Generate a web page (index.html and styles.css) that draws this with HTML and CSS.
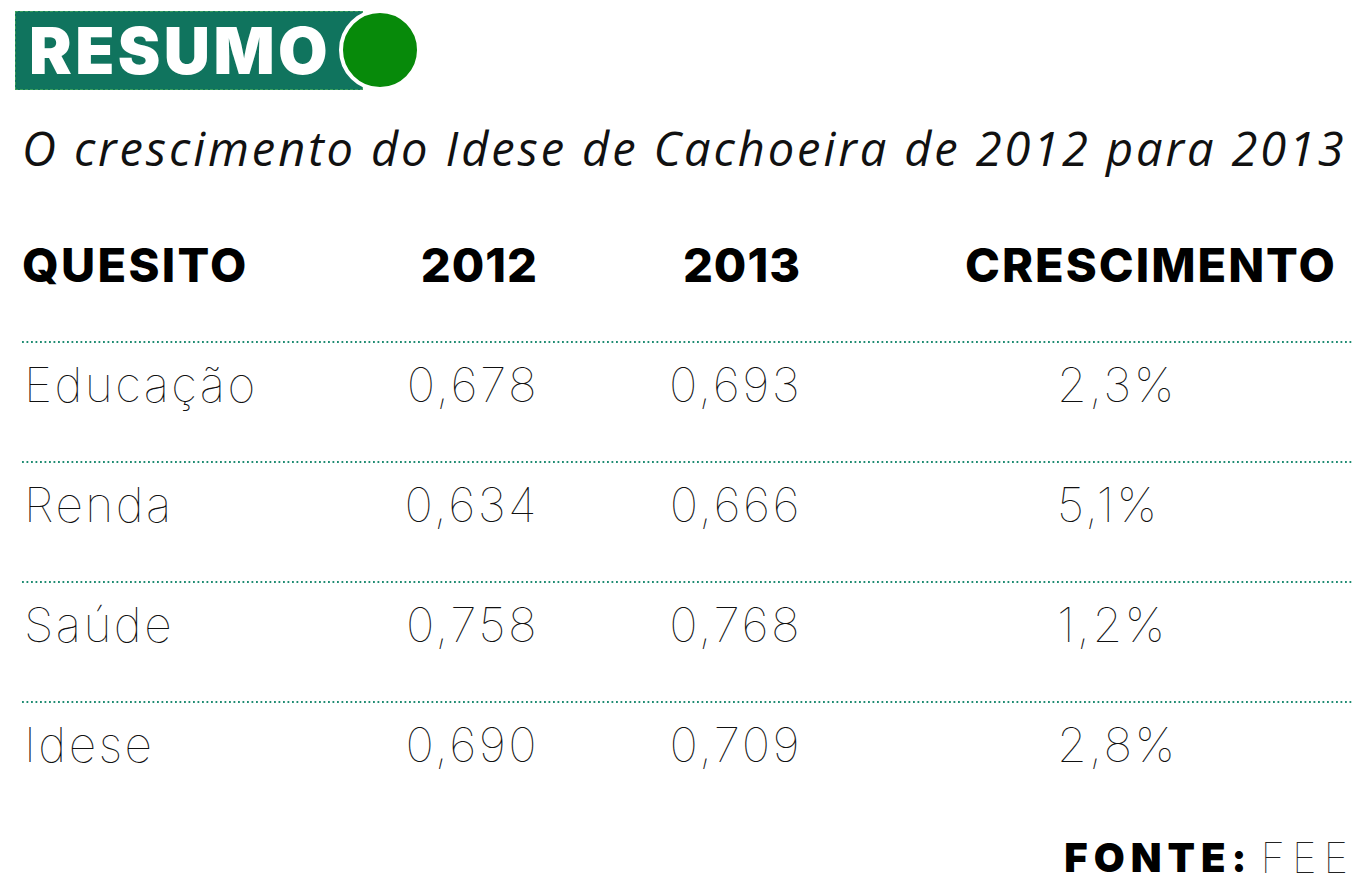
FILE: index.html
```html
<!DOCTYPE html>
<html lang="pt">
<head>
<meta charset="utf-8">
<title>Resumo Idese</title>
<link rel="stylesheet" href="styles.css">
</head>
<body>
<div class="page">
  <div class="badge">
    <div class="badge-label">RESUMO</div>
    <div class="badge-dot"></div>
  </div>
  <h1 class="subtitle">O crescimento do Idese de Cachoeira de 2012 para 2013</h1>
  <div class="table">
    <div class="row head">
      <div class="c1">QUESITO</div>
      <div class="c2">2012</div>
      <div class="c3">2013</div>
      <div class="c4">CRESCIMENTO</div>
    </div>
    <div class="rule"></div>
    <div class="row data">
      <div class="c1">Educação</div>
      <div class="c2">0,678</div>
      <div class="c3">0,693</div>
      <div class="c4">2,3%</div>
    </div>
    <div class="rule"></div>
    <div class="row data">
      <div class="c1">Renda</div>
      <div class="c2">0,634</div>
      <div class="c3">0,666</div>
      <div class="c4">5,1%</div>
    </div>
    <div class="rule"></div>
    <div class="row data">
      <div class="c1">Saúde</div>
      <div class="c2">0,758</div>
      <div class="c3">0,768</div>
      <div class="c4">1,2%</div>
    </div>
    <div class="rule"></div>
    <div class="row data">
      <div class="c1">Idese</div>
      <div class="c2">0,690</div>
      <div class="c3">0,709</div>
      <div class="c4">2,8%</div>
    </div>
  </div>
  <div class="source"><span class="source-key">FONTE:</span><span class="source-val">FEE</span></div>
</div>
</body>
</html>
```

FILE: styles.css
```css
* { box-sizing: border-box; }
html, body { margin: 0; padding: 0; background: #fff; }
body { width: 1360px; height: 891px; overflow: hidden; color: #000; }

.page { padding: 9px 8px 0 15px; }

.badge { display: flex; align-items: center; }
.badge-label {
  height: 79px;
  width: 348px;
  background: #10745e;
  border: 1px dashed #3b9f5c;
  color: #fff;
  font-family: Inter, "Liberation Sans", sans-serif;
  font-weight: 900;
  font-size: 64px;
  line-height: 77px;
  padding-left: 13px;
  letter-spacing: 3.4px;
}
.badge-dot {
  width: 82px;
  height: 82px;
  border-radius: 50%;
  background: #078a0a;
  border: 4px solid #fff;
  margin-left: -24px;
}

.subtitle {
  margin: 34px 0 0 7px;
  font-family: "Open Sans", "Liberation Sans", sans-serif;
  font-style: italic;
  font-weight: 400;
  font-size: 47px;
  line-height: 46px;
  letter-spacing: 2.9px;
  color: #111;
  white-space: nowrap;
}

.table { margin-top: 70px; margin-left: 7px; width: 1330px; }
.row {
  display: grid;
  grid-template-columns: 300px 215px 263px 552px;
}
.row .c2, .row .c3 { text-align: right; }
.head {
  font-family: Inter, "Liberation Sans", sans-serif;
  font-weight: 800;
  font-size: 47px;
  line-height: 47px;
  letter-spacing: 2.3px;
  height: 100px;
}
.head .c2, .head .c3 { margin-right: -2px; }
.head .c2 { letter-spacing: 1px; margin-right: -1px; }
.head .c3 { letter-spacing: 1px; margin-right: -1px; }
.head .c4 { padding-left: 165px; letter-spacing: 2px; }
.data {
  font-family: Inter, "Liberation Sans", sans-serif;
  font-weight: 100;
  font-size: 48px;
  line-height: 48px;
  letter-spacing: 2.4px;
  color: #111;
  height: 118px;
  padding-top: 18px;
}
.data .c1 { padding-left: 2px; }
.data .c2, .data .c3 { margin-right: -2px; }
.data .c4 { padding-left: 257px; }

.rule {
  height: 2px;
  background-image: linear-gradient(to right, #1f8c72 45%, transparent 45%);
  background-size: 4.5px 2px;
  background-repeat: repeat-x;
}

.source {
  margin-top: 17px;
  display: flex;
  justify-content: flex-end;
  gap: 8px;
  padding-right: 4px;
  font-family: Inter, "Liberation Sans", sans-serif;
  font-size: 40px;
  line-height: 40px;
}
.source-key { font-weight: 900; letter-spacing: 6px; }
.source-val { font-weight: 100; font-size: 42px; letter-spacing: 7px; margin-right: -7px; color: #222; }
```
